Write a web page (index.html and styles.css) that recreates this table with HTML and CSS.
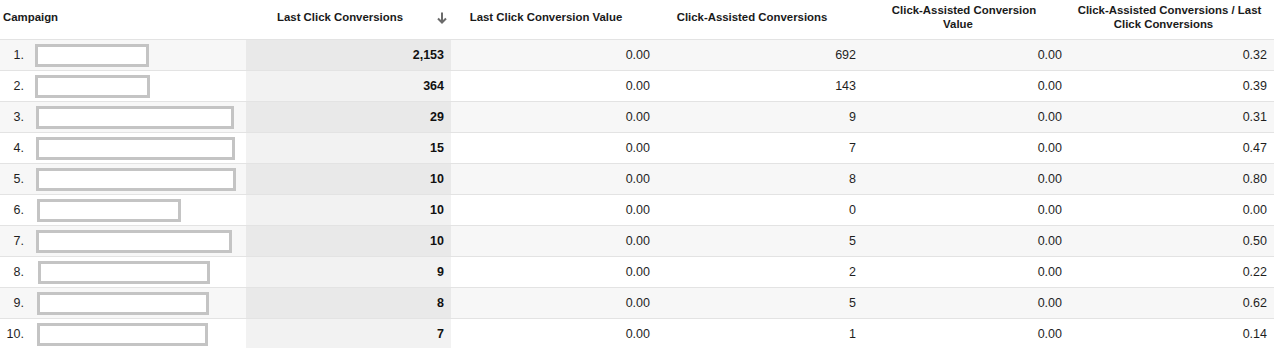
FILE: index.html
```html
<!DOCTYPE html>
<html lang="en">
<head>
<meta charset="utf-8">
<title>Campaign report</title>
<link rel="stylesheet" href="styles.css">
</head>
<body>
<table class="report">
  <colgroup>
    <col class="col-name">
    <col class="col-metric">
    <col class="col-metric-w">
    <col class="col-metric-w">
    <col class="col-metric-w">
    <col class="col-metric">
  </colgroup>
  <thead>
    <tr>
      <th class="h-name">Campaign</th>
      <th class="h-metric h-sorted"><svg class="sort-arrow" width="10" height="12" viewBox="0 0 10 12"><path d="M5 0.5V10.5M1 6.5L5 10.5L9 6.5" fill="none" stroke="#6b6b6b" stroke-width="2"/></svg>Last Click Conversions</th>
      <th class="h-metric">Last Click Conversion Value<i class="pad"></i></th>
      <th class="h-metric">Click-Assisted Conversions<i class="pad"></i></th>
      <th class="h-metric">Click-Assisted Conversion<br>Value<i class="pad"></i></th>
      <th class="h-metric">Click-Assisted Conversions / Last<br>Click Conversions<i class="pad"></i></th>
    </tr>
  </thead>
  <tbody>
    <tr class="odd"><td class="name"><div class="camp"><span class="idx">1.</span><span class="redact" style="margin-left:11px;width:114px"></span></div></td><td class="sorted">2,153</td><td>0.00</td><td>692</td><td>0.00</td><td>0.32</td></tr>
    <tr class="even"><td class="name"><div class="camp"><span class="idx">2.</span><span class="redact" style="margin-left:11px;width:115px"></span></div></td><td class="sorted">364</td><td>0.00</td><td>143</td><td>0.00</td><td>0.39</td></tr>
    <tr class="odd"><td class="name"><div class="camp"><span class="idx">3.</span><span class="redact" style="margin-left:12px;width:198px"></span></div></td><td class="sorted">29</td><td>0.00</td><td>9</td><td>0.00</td><td>0.31</td></tr>
    <tr class="even"><td class="name"><div class="camp"><span class="idx">4.</span><span class="redact" style="margin-left:12px;width:199px"></span></div></td><td class="sorted">15</td><td>0.00</td><td>7</td><td>0.00</td><td>0.47</td></tr>
    <tr class="odd"><td class="name"><div class="camp"><span class="idx">5.</span><span class="redact" style="margin-left:12px;width:200px"></span></div></td><td class="sorted">10</td><td>0.00</td><td>8</td><td>0.00</td><td>0.80</td></tr>
    <tr class="even"><td class="name"><div class="camp"><span class="idx">6.</span><span class="redact" style="margin-left:13px;width:144px"></span></div></td><td class="sorted">10</td><td>0.00</td><td>0</td><td>0.00</td><td>0.00</td></tr>
    <tr class="odd"><td class="name"><div class="camp"><span class="idx">7.</span><span class="redact" style="margin-left:12px;width:196px"></span></div></td><td class="sorted">10</td><td>0.00</td><td>5</td><td>0.00</td><td>0.50</td></tr>
    <tr class="even"><td class="name"><div class="camp"><span class="idx">8.</span><span class="redact" style="margin-left:14px;width:172px"></span></div></td><td class="sorted">9</td><td>0.00</td><td>2</td><td>0.00</td><td>0.22</td></tr>
    <tr class="odd"><td class="name"><div class="camp"><span class="idx">9.</span><span class="redact" style="margin-left:13px;width:172px"></span></div></td><td class="sorted">8</td><td>0.00</td><td>5</td><td>0.00</td><td>0.62</td></tr>
    <tr class="even"><td class="name"><div class="camp"><span class="idx">10.</span><span class="redact" style="margin-left:13px;width:171px"></span></div></td><td class="sorted">7</td><td>0.00</td><td>1</td><td>0.00</td><td>0.14</td></tr>
  </tbody>
</table>
</body>
</html>
```

FILE: styles.css
```css
html, body {
  margin: 0;
  padding: 0;
  background: #ffffff;
}

body {
  font-family: "Liberation Sans", Arial, sans-serif;
  color: #222222;
}

.report {
  width: 1274px;
  table-layout: fixed;
  border-collapse: separate;
  border-spacing: 0;
}

.col-name { width: 246px; }
.col-metric { width: 205px; }
.col-metric-w { width: 206px; }

.report th {
  height: 39px;
  box-sizing: border-box;
  padding: 0 4px 5px 0;
  font-size: 11.4px;
  line-height: 14px;
  font-weight: bold;
  color: #1a1a1a;
  text-align: center;
  vertical-align: middle;
}

.report th.h-name {
  text-align: left;
  padding-left: 3px;
}

.pad {
  display: inline-block;
  width: 12px;
}

.sort-arrow {
  float: right;
  margin: 2px 0 0 3px;
}

.report td {
  height: 31px;
  box-sizing: border-box;
  border-top: 1px solid #e3e3e3;
  padding: 0 7px 0 0;
  font-size: 12.5px;
  line-height: 14px;
  text-align: right;
  vertical-align: middle;
  color: #1f1f1f;
}

.report tr.odd td { background: #f7f7f7; }
.report tr.even td { background: #ffffff; }
.report tr.odd td.sorted { background: #e9e9e9; }
.report tr.even td.sorted { background: #f2f2f2; }

.report td.sorted {
  font-weight: bold;
  color: #111111;
}

.report td.name {
  text-align: left;
  padding: 0;
}

.camp {
  display: flex;
  align-items: center;
}

.idx {
  width: 24px;
  text-align: right;
  flex: none;
}

.redact {
  flex: none;
  display: block;
  height: 23px;
  box-sizing: border-box;
  border: 3px solid #c4c4c4;
  background: #ffffff;
}
```
